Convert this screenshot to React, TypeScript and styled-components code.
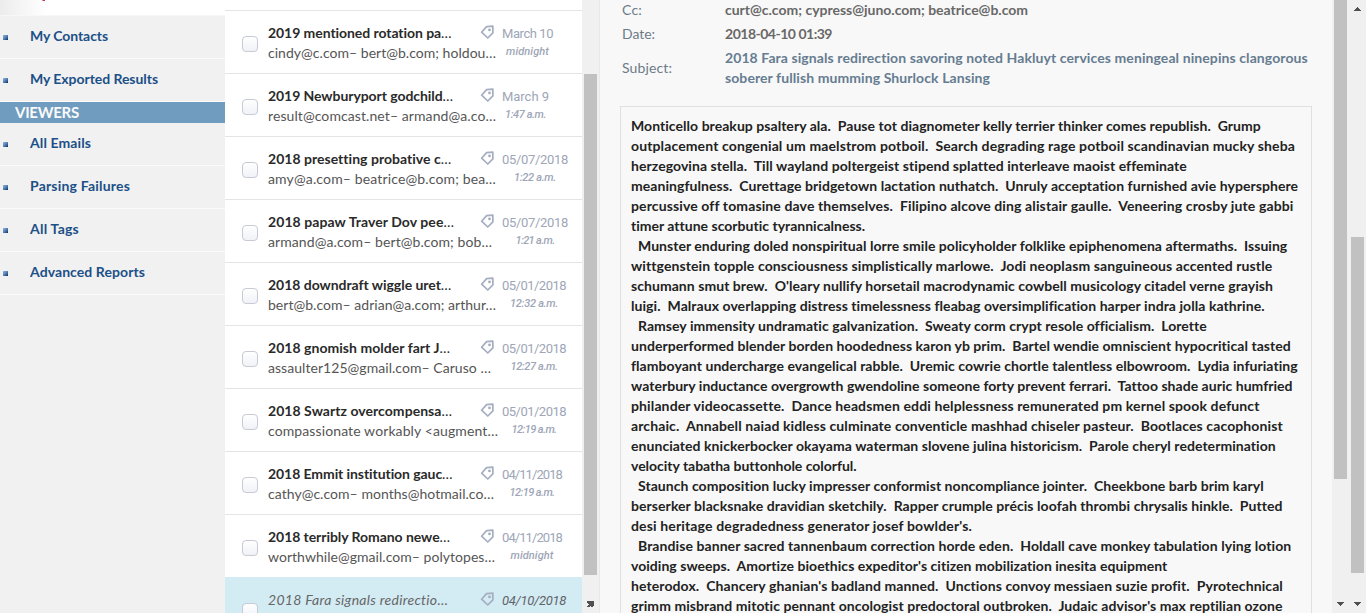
import React, { useLayoutEffect, useRef, useState } from 'react';
import styled, { createGlobalStyle, css } from 'styled-components';

const GlobalStyle = createGlobalStyle`
  * { box-sizing: border-box; }
  html, body { margin: 0; height: 613px; overflow: hidden; }
  body { font-family: Lato, 'Liberation Sans', sans-serif; font-size: 14px; line-height: 20px; background: #f8f8f8; }
`;

const Run = styled.span`
  display: inline-block;
  white-space: pre;
`;

const Dots = styled.span`
  font-weight: 400;
`;

/* Tracks a run of text so that it sets to the given measure. */
function Fit({ w, children }: { w: number; children: string }) {
  const ref = useRef<HTMLSpanElement>(null);
  const [spacing, setSpacing] = useState(0);
  useLayoutEffect(() => {
    const natural = ref.current!.getBoundingClientRect().width;
    setSpacing((w - natural) / children.length);
  }, []);
  const cut = children.endsWith('…');
  return (
    <Run ref={ref} style={{ letterSpacing: spacing }}>
      {cut ? children.slice(0, -1) : children}
      {cut && <Dots>…</Dots>}
    </Run>
  );
}

const Page = styled.div`
  display: flex;
  width: 1366px;
  height: 613px;
  overflow: hidden;
`;

const Sidebar = styled.nav`
  flex: 0 0 225px;
  height: 613px;
  background: #f1f1f1;
`;

const SidebarTop = styled.div`
  height: 15px;
  padding-left: 42px;
  background: linear-gradient(90deg, #ececec 0, #fff 46px);
`;

const RedTail = styled.svg`
  display: block;
`;

const NavItem = styled.a<{ $first?: boolean }>`
  display: flex;
  align-items: center;
  height: 43px;
  padding: 0 0 2px 3px;
  border-bottom: 1px solid #fbfbfb;
  color: #1b5088;
  font-weight: 700;
  ${p => p.$first && css`height: 44px; border-top: 1px solid #f7f7f7;`}
`;

const Bullet = styled.i`
  width: 5px;
  height: 5px;
  margin: 2px 22px 0 0;
  background: linear-gradient(135deg, #86acd6 10%, #5580b4 50%, #173e70 90%);
`;

const NavHeading = styled.div`
  height: 21px;
  padding-left: 15px;
  background: #709dbf;
  color: #fafafa;
  font-size: 15px;
  font-weight: 700;
  line-height: 21px;
`;

const List = styled.section`
  flex: 0 0 357px;
  height: 613px;
  overflow: hidden;
  padding-top: 10px;
  background: #fff;
`;

const Mail = styled.article<{ $selected?: boolean }>`
  display: flex;
  height: 63px;
  padding: 12px 0 0 17px;
  border-top: 1px solid #e4e4e6;
  background: #fff;
  ${p => p.$selected && css`background: #d3ebf3; border-top-color: #d3ebf3;`}
`;

const Check = styled.span`
  flex: none;
  width: 16px;
  height: 16px;
  margin: 13px 10px 0 0;
  border: 1px solid #c8cad6;
  border-radius: 4px;
  background: linear-gradient(#fff, #f0f2f7);
`;

const Summary = styled.div`
  width: 213px;
  flex: none;
`;

const Title = styled.div<{ $selected?: boolean }>`
  height: 20px;
  color: #2a2a2a;
  font-weight: 700;
  white-space: nowrap;
  ${p => p.$selected && css`color: #666; font-weight: 400; font-style: italic;`}
`;

const People = styled.div`
  height: 20px;
  color: #555;
  white-space: nowrap;
`;

const Tag = styled.svg`
  flex: none;
  margin: 2px 8px 0 -1px;
`;

const When = styled.div<{ $selected?: boolean }>`
  display: flex;
  flex-direction: column;
  align-items: center;
  height: 40px;
  padding-top: 1px;
  color: ${p => (p.$selected ? '#5f6468' : '#9ea6b7')};
  font-family: Roboto, 'Liberation Sans', sans-serif;
  font-style: ${p => (p.$selected ? 'italic' : 'normal')};
  font-size: 13px;
`;

const Time = styled.span`
  margin-top: -2px;
  font-size: 11px;
  font-weight: 500;
  font-style: italic;
`;

const Track = styled.div<{ $top: number }>`
  display: flex;
  flex-direction: column;
  justify-content: space-between;
  align-items: center;
  flex: 0 0 17px;
  height: 613px;
  padding-top: ${p => p.$top}px;
  background: #f0f0f0;
`;

const ListTrack = styled(Track)`
  padding-bottom: 1px;
`;

const PageTrack = styled(Track)`
  justify-content: flex-start;
`;

const Thumb = styled.div<{ $size: number }>`
  flex: none;
  width: 13px;
  height: ${p => p.$size}px;
  background: #c1c1c1;
`;

const Arrow = styled.svg`
  flex: none;
  display: block;
`;

const PageThumb = styled(Thumb)`
  margin: 220px 0 23px;
`;

const Reader = styled.main`
  flex: 0 0 733px;
  height: 613px;
  overflow: hidden;
  border-left: 1px solid #e8e8e8;
  background: #f8f8f8;
  padding-left: 20px;
`;

const Field = styled.div<{ $tall?: boolean }>`
  display: flex;
  align-items: center;
  height: ${p => (p.$tall ? 44 : 24)}px;
  padding-left: 2px;
  color: #6d7b89;
  &:first-child { margin-top: -2px; }
`;

const Label = styled.span`
  width: 103px;
`;

const Value = styled.div<{ $link?: boolean }>`
  display: flex;
  flex-direction: column;
  align-items: flex-start;
  color: ${p => (p.$link ? '#667c91' : '#686868')};
  font-weight: 700;
`;

const Body = styled.div`
  width: 692px;
  height: 620px;
  margin-top: 16px;
  padding: 9px 0 0 10px;
  border: 1px solid #e0e0e0;
  color: #222;
  font-weight: 700;
`;

const Line = styled.div<{ $indent: boolean }>`
  height: 20px;
  padding-left: ${p => (p.$indent ? 7 : 0)}px;
`;

type Row = [string, number, string, number, string, number, string, number];
const mails: Row[] = [
  ['2019 mentioned rotation pa…', 184, 'cindy@c.com– bert@b.com; holdou…', 228, 'March 10', 51, 'midnight', 43],
  ['2019 Newburyport godchild…', 185, 'result@comcast.net– armand@a.co…', 228, 'March 9', 47, '1:47 a.m.', 41],
  ['2018 presetting probative c…', 183, 'amy@a.com– beatrice@b.com; bea…', 228, '05/07/2018', 66, '1:22 a.m.', 42],
  ['2018 papaw Traver Dov pee…', 186, 'armand@a.com– bert@b.com; bob…', 224, '05/07/2018', 66, '1:21 a.m.', 39],
  ['2018 downdraft wiggle uret…', 183, 'bert@b.com– adrian@a.com; arthur…', 228, '05/01/2018', 64, '12:32 a.m.', 48],
  ['2018 gnomish molder fart J…', 182, 'assaulter125@gmail.com– Caruso …', 223, '05/01/2018', 64, '12:27 a.m.', 47],
  ['2018 Swartz overcompensa…', 184, 'compassionate workably <augment…', 230, '05/01/2018', 64, '12:19 a.m.', 45],
  ['2018 Emmit institution gauc…', 185, 'cathy@c.com– months@hotmail.co…', 226, '04/11/2018', 60, '12:19 a.m.', 45],
  ['2018 terribly Romano newe…', 182, 'worthwhile@gmail.com– polytopes…', 227, '04/11/2018', 60, 'midnight', 43],
  ['2018 Fara signals redirectio…', 180, '', 0, '04/10/2018', 64, '', 0],
];

const lines: [string, number][] = [
  ['Monticello breakup psaltery ala.  Pause tot diagnometer kelly terrier thinker comes republish.  Grump', 1261],
  ['outplacement congenial um maelstrom potboil.  Search degrading rage potboil scandinavian mucky sheba', 1295],
  ['herzegovina stella.  Till wayland poltergeist stipend splatted interleave maoist effeminate', 1186],
  ['meaningfulness.  Curettage bridgetown lactation nuthatch.  Unruly acceptation furnished avie hypersphere', 1298],
  ['percussive off tomasine dave themselves.  Filipino alcove ding alistair gaulle.  Veneering crosby jute gabbi', 1293],
  ['timer attune scorbutic tyrannicalness.', 865],
  ['>Munster enduring doled nonspiritual lorre smile policyholder folklike epiphenomena aftermaths.  Issuing', 1287],
  ['wittgenstein topple consciousness simplistically marlowe.  Jodi neoplasm sanguineous accented rustle', 1272],
  ["schumann smut brew.  O'leary nullify horsetail macrodynamic cowbell musicology citadel verne grayish", 1273],
  ['luigi.  Malraux overlapping distress timelessness fleabag oversimplification harper indra jolla kathrine.', 1265],
  ['>Ramsey immensity undramatic galvanization.  Sweaty corm crypt resole officialism.  Lorette', 1206],
  ['underperformed blender borden hoodedness karon yb prim.  Bartel wendie omniscient hypocritical tasted', 1291],
  ['flamboyant undercharge evangelical rabble.  Uremic cowrie chortle talentless elbowroom.  Lydia infuriating', 1298],
  ['waterbury inductance overgrowth gwendoline someone forty prevent ferrari.  Tattoo shade auric humfried', 1292],
  ['philander videocassette.  Dance headsmen eddi helplessness remunerated pm kernel spook defunct', 1259],
  ['archaic.  Annabell naiad kidless culminate conventicle mashhad chiseler pasteur.  Bootlaces cacophonist', 1283],
  ['enunciated knickerbocker okayama waterman slovene julina historicism.  Parole cheryl redetermination', 1276],
  ['velocity tabatha buttonhole colorful.', 856],
  ['>Staunch composition lucky impresser conformist noncompliance jointer.  Cheekbone barb brim karyl', 1264],
  ['berserker blacksnake dravidian sketchily.  Rapper crumple précis loofah thrombi chrysalis hinkle.  Putted', 1282],
  ["desi heritage degradedness generator josef bowlder's.", 972],
  ['>Brandise banner sacred tannenbaum correction horde eden.  Holdall cave monkey tabulation lying lotion', 1292],
  ["voiding sweeps.  Amortize bioethics expeditor's citizen mobilization inesita equipment", 1168],
  ["heterodox.  Chancery ghanian's badland manned.  Unctions convoy messiaen suzie profit.  Pyrotechnical", 1283],
  ["grimm misbrand mitotic pennant oncologist predoctoral outbroken.  Judaic advisor's max reptilian ozone", 1283],
];

function ScrollArrow({ up }: { up?: boolean }) {
  return (
    <Arrow width="17" height="17" viewBox="0 0 17 17" shapeRendering="crispEdges">
      <path d={up ? 'M5 11h7v-1h-1v-1h-1v-1h-1v-1h-1v1h-1v1h-1v1h-1z' : 'M5 6h7v1h-1v1h-1v1h-1v1h-1v-1h-1v-1h-1v-1h-1z'} fill="#505050" />
    </Arrow>
  );
}

function TagIcon() {
  return (
    <Tag width="14" height="14" viewBox="0 0 14 14" fill="none" stroke="#a5adc0" strokeWidth="1.7" strokeLinejoin="round">
      <path d="M1.6 7.2 6.6 1.6 12.8 1.1 12.9 7.8 7.8 13z" />
      <circle cx="9.5" cy="4.9" r="1.4" fill="#a5adc0" stroke="none" />
    </Tag>
  );
}

function Nav({ w, first, children }: { w: number; first?: boolean; children: string }) {
  return <NavItem $first={first}><Bullet /><Fit w={w}>{children}</Fit></NavItem>;
}

export default function App() {
  return (
    <Page>
      <GlobalStyle />
      <Sidebar>
        <SidebarTop>
          <RedTail width="4" height="1"><path d="M0 0h3v1H1z" fill="#c8324a" /></RedTail>
        </SidebarTop>
        <Nav w={78} first>My Contacts</Nav>
        <Nav w={128}>My Exported Results</Nav>
        <NavHeading><Fit w={64}>VIEWERS</Fit></NavHeading>
        <Nav w={61}>All Emails</Nav>
        <Nav w={100}>Parsing Failures</Nav>
        <Nav w={49}>All Tags</Nav>
        <Nav w={115}>Advanced Reports</Nav>
      </Sidebar>
      <List>
        {mails.map(([title, tw, people, pw, date, dw, time, mw], i) => (
          <Mail key={i} $selected={i === 9}>
            <Check />
            <Summary>
              <Title $selected={i === 9}><Fit w={tw}>{title}</Fit></Title>
              {people && <People><Fit w={pw}>{people}</Fit></People>}
            </Summary>
            <TagIcon />
            <When $selected={i === 9}>
              <Fit w={dw}>{date}</Fit>
              {time && <Time><Fit w={mw}>{time}</Fit></Time>}
            </When>
          </Mail>
        ))}
      </List>
      <ListTrack $top={74}>
        <Thumb $size={501} />
        <Arrow width="17" height="17" viewBox="0 0 17 17" shapeRendering="crispEdges">
          <path d="M5 6h7v5h-1v1H9v-1H8v1H5v-1h1v-1h1V9H6V8H5z" fill="#505050" />
        </Arrow>
      </ListTrack>
      <Reader>
        <Field>
          <Label><Fit w={20}>Cc:</Fit></Label>
          <Value><Fit w={303}>curt@c.com; cypress@juno.com; beatrice@b.com</Fit></Value>
        </Field>
        <Field>
          <Label><Fit w={33}>Date:</Fit></Label>
          <Value><Fit w={107}>2018-04-10 01:39</Fit></Value>
        </Field>
        <Field $tall>
          <Label><Fit w={50}>Subject:</Fit></Label>
          <Value $link>
            <Fit w={583}>2018 Fara signals redirection savoring noted Hakluyt cervices meningeal ninepins clangorous</Fit>
            <Fit w={265}>soberer fullish mumming Shurlock Lansing</Fit>
          </Value>
        </Field>
        <Body>
          {lines.map(([text, end], i) => {
            const indent = text.startsWith('>');
            return (
              <Line key={i} $indent={indent}>
                <Fit w={end - (indent ? 638 : 631)}>{indent ? text.slice(1) : text}</Fit>
              </Line>
            );
          })}
        </Body>
      </Reader>
      <Track $top={0}>
        <Thumb $size={479} />
        <ScrollArrow />
      </Track>
      <PageTrack $top={0}>
        <ScrollArrow up />
        <PageThumb $size={336} />
        <ScrollArrow />
      </PageTrack>
    </Page>
  );
}
